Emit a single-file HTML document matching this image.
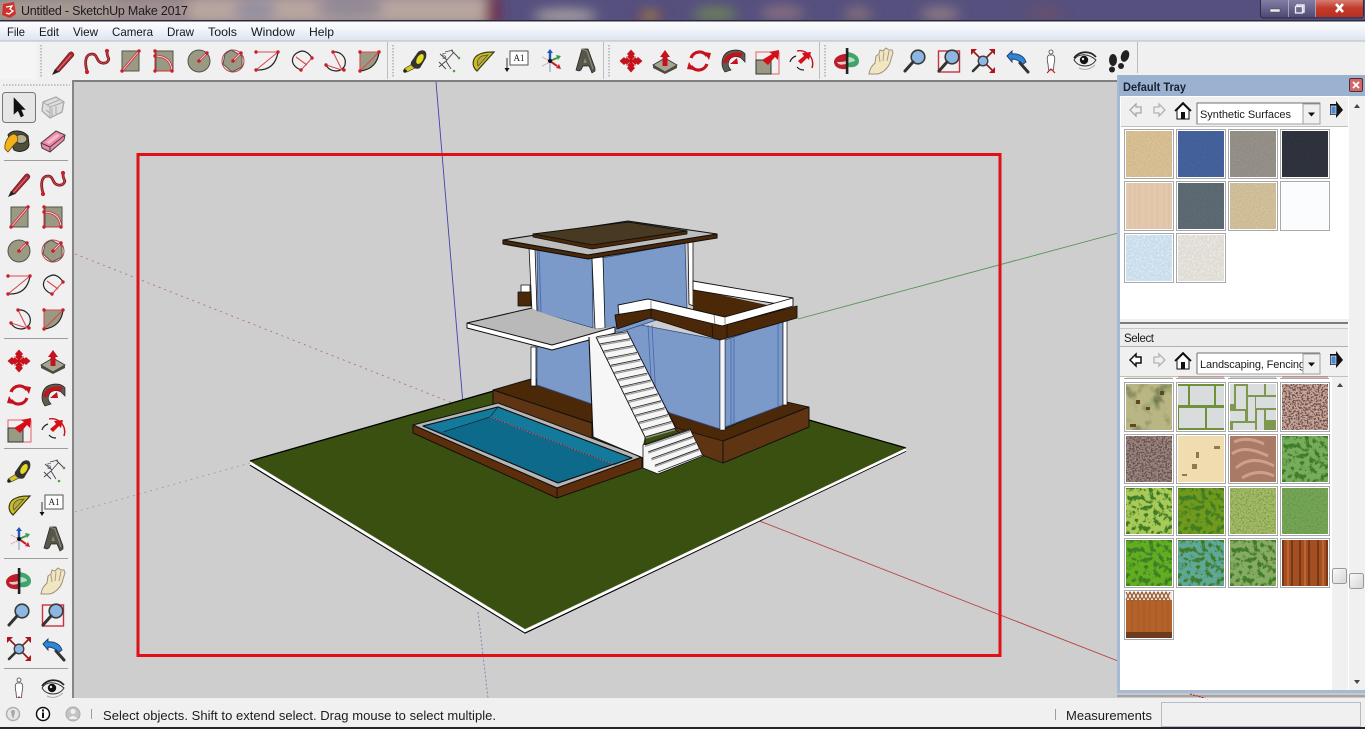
<!DOCTYPE html>
<html lang="en"><head><meta charset="utf-8"><title>Untitled - SketchUp Make 2017</title>
<style>html,body{margin:0;padding:0;background:#f0f0f0;overflow:hidden}svg{display:block}text{font-family:"Liberation Sans",sans-serif}</style></head>
<body>
<svg xmlns="http://www.w3.org/2000/svg" width="1365" height="729" viewBox="0 0 1365 729">
<defs>
<linearGradient id="gMenu" x1="0" y1="0" x2="0" y2="1"><stop offset="0" stop-color="#fbfcfe"/><stop offset=".35" stop-color="#f4f7fb"/><stop offset="1" stop-color="#dce4f1"/></linearGradient>
<linearGradient id="gMin" x1="0" y1="0" x2="0" y2="1"><stop offset="0" stop-color="#8b87a8"/><stop offset=".5" stop-color="#6b6790"/><stop offset="1" stop-color="#4b4770"/></linearGradient>
<linearGradient id="gClose" x1="0" y1="0" x2="0" y2="1"><stop offset="0" stop-color="#d9867a"/><stop offset=".5" stop-color="#c23b2b"/><stop offset="1" stop-color="#b9301f"/></linearGradient>
<linearGradient id="gThumb" x1="0" y1="0" x2="1" y2="1"><stop offset="0" stop-color="#fafafa"/><stop offset="1" stop-color="#d4d4d4"/></linearGradient>
<filter id="bl" x="-30%" y="-60%" width="160%" height="220%"><feGaussianBlur stdDeviation="6"/></filter>
<filter id="fFine" x="0" y="0" width="100%" height="100%"><feTurbulence type="fractalNoise" baseFrequency=".8" numOctaves="2" seed="3" result="t"/><feColorMatrix in="t" type="matrix" values="0 0 0 0 0 0 0 0 0 0 0 0 0 0 0 .5 0 0 0 -.2"/><feComposite in2="SourceGraphic" operator="in" result="n"/><feMerge><feMergeNode in="SourceGraphic"/><feMergeNode in="n"/></feMerge></filter>
<filter id="fSpeck" x="0" y="0" width="100%" height="100%"><feTurbulence type="fractalNoise" baseFrequency=".55" numOctaves="2" seed="8" result="t"/><feColorMatrix in="t" type="matrix" values="0 0 0 0 .15 0 0 0 0 .08 0 0 0 0 .08 7 0 0 0 -3.2"/><feComposite in2="SourceGraphic" operator="in" result="n"/><feMerge><feMergeNode in="SourceGraphic"/><feMergeNode in="n"/></feMerge></filter>
<filter id="fLeaf" x="0" y="0" width="100%" height="100%"><feTurbulence type="fractalNoise" baseFrequency=".2" numOctaves="3" seed="5" result="t"/><feColorMatrix in="t" type="matrix" values="0 0 0 0 .05 0 0 0 0 .2 0 0 0 0 .02 7 0 0 0 -3.4"/><feComposite in2="SourceGraphic" operator="in" result="n"/><feMerge><feMergeNode in="SourceGraphic"/><feMergeNode in="n"/></feMerge></filter>
<filter id="fBlot" x="0" y="0" width="100%" height="100%"><feTurbulence type="fractalNoise" baseFrequency=".07" numOctaves="3" seed="12" result="t"/><feColorMatrix in="t" type="matrix" values="0 0 0 0 .1 0 0 0 0 .15 0 0 0 0 .05 2.500 0 0 0 -1.250"/><feComposite in2="SourceGraphic" operator="in" result="n"/><feMerge><feMergeNode in="SourceGraphic"/><feMergeNode in="n"/></feMerge></filter>
<filter id="fGrass" x="0" y="0" width="100%" height="100%"><feTurbulence type="fractalNoise" baseFrequency=".6" numOctaves="2" seed="21" result="t"/><feColorMatrix in="t" type="matrix" values="0 0 0 0 .15 0 0 0 0 .25 0 0 0 0 .05 2.500 0 0 0 -1.050"/><feComposite in2="SourceGraphic" operator="in" result="n"/><feMerge><feMergeNode in="SourceGraphic"/><feMergeNode in="n"/></feMerge></filter>
<filter id="fIce" x="0" y="0" width="100%" height="100%"><feTurbulence type="fractalNoise" baseFrequency=".5" numOctaves="3" seed="2" result="t"/><feColorMatrix in="t" type="matrix" values="0 0 0 0 1 0 0 0 0 1 0 0 0 0 1 1.2 0 0 0 -.5"/><feComposite in2="SourceGraphic" operator="in" result="n"/><feMerge><feMergeNode in="SourceGraphic"/><feMergeNode in="n"/></feMerge></filter>

<rect id="frame" x=".5" y=".5" width="49" height="49" fill="#fff" stroke="#a8a8a8"/>

<!-- ICONS (centred at 0,0) -->
<g id="pencil"><path d="M-8,9 L6,-8 Q8,-10 9.500,-8.500 L10.500,-7.500 Q11.500,-6 10,-4.500 L-4,11 Z" fill="#ad2730" stroke="#5a1a1c" stroke-width=".6"/><path d="M-6,10 L8,-6" stroke="#e2858a" fill="none" stroke-width=".8"/><path d="M-11,14 L-8,8 L-4,11 Z" fill="#222"/></g>
<g id="free"><path d="M-10,10 C-13,0 -11,-7 -5,-7 C1,-7 -1,1 5,2 C10,3 13,-1 11,-4 C10,-6 10,-8 10,-10" fill="none" stroke="#8e1a22" stroke-width="2.800"/><path d="M-10,10 C-13,0 -11,-7 -5,-7 C1,-7 -1,1 5,2 C10,3 13,-1 11,-4 C10,-6 10,-8 10,-10" fill="none" stroke="#c9565c" stroke-width=".7"/><circle cx="-10" cy="11" r="2.100" fill="#c8202a"/><circle cx="10" cy="-10" r="2.100" fill="#c8202a"/></g>
<g id="rect"><rect x="-8" y="-10" width="17" height="20" fill="#9a9984" stroke="#55554a"/><path d="M-8,10 L9,-10" stroke="#d03040" stroke-width="2.600"/><path d="M-8,10 L9,-10" stroke="#f4dcdc" stroke-width=".9"/><circle cx="-8" cy="10" r="1.700" fill="#c8202a"/><circle cx="9" cy="-10" r="1.700" fill="#c8202a"/></g>
<g id="rrect"><rect x="-8" y="-10" width="17" height="20" fill="#9a9984" stroke="#55554a"/><path d="M-9,-5 Q7,-5 8,10" fill="none" stroke="#d03040" stroke-width="2.600"/><path d="M-9,-5 Q7,-5 8,10" fill="none" stroke="#f4dcdc" stroke-width=".9"/><path d="M-9,-10 V10 H9" fill="none" stroke="#c8303a"/><g fill="#c8202a"><circle cx="-9" cy="-10" r="1.700"/><circle cx="-9" cy="-5" r="1.700"/><circle cx="-9" cy="10" r="1.700"/><circle cx="8" cy="10" r="1.700"/></g></g>
<g id="circ"><circle r="11" fill="#9a9984" stroke="#55554a"/><path d="M0,0 L8,-8" stroke="#d03040" stroke-width="2.600"/><path d="M0,0 L8,-8" stroke="#f4dcdc" stroke-width=".9"/><circle r="1.800" fill="#c8202a"/><circle cx="8" cy="-8" r="1.700" fill="#c8202a"/></g>
<g id="poly"><circle r="11" fill="none" stroke="#c8404a"/><path d="M-2,-11 L9,-5 L9,6 L-1,11 L-10,3 L-8,-7 Z" fill="#9a9984" stroke="#55554a"/><path d="M0,0 L8,-8" stroke="#d03040" stroke-width="2.600"/><path d="M0,0 L8,-8" stroke="#f4dcdc" stroke-width=".9"/><circle r="1.800" fill="#c8202a"/><circle cx="8" cy="-8" r="1.700" fill="#c8202a"/></g>
<g id="arc"><path d="M-11,-9 H11 M-11,9 L11,-9" stroke="#d84a52" fill="none" stroke-width="1.100"/><path d="M-11,9 Q8,10 11,-9" fill="none" stroke="#222" stroke-width="1.200"/><g fill="#c8202a"><circle cx="-11" cy="-9" r="1.700"/><circle cx="11" cy="-9" r="1.700"/><circle cx="-11" cy="9" r="1.700"/></g></g>
<g id="arc2"><path d="M-1,9 C-14,4 -11,-8 0,-10 C3,-10 7,-8 10,-3" fill="none" stroke="#222" stroke-width="1.200"/><path d="M-1,9 L10,-3 M-6,-4 L5,4" stroke="#d84a52" fill="none" stroke-width="1.100"/><g fill="#c8202a"><circle cx="-1" cy="9" r="1.700"/><circle cx="10" cy="-3" r="1.700"/></g></g>
<g id="arc3"><path d="M-10,4 C-6,12 6,12 9,4 C11,-4 4,-10 -3,-9" fill="none" stroke="#222" stroke-width="1.200"/><path d="M-10,4 L6,9 L-3,-9" stroke="#d84a52" fill="none" stroke-width="1.100"/><g fill="#c8202a"><circle cx="-10" cy="4" r="1.700"/><circle cx="8" cy="9" r="1.700"/><circle cx="-3" cy="-9" r="1.700"/></g></g>
<g id="pie"><path d="M-9,10 L-9,-9 H10 C9,2 2,9 -9,10 Z" fill="#9a9984"/><path d="M-9,10 C2,9 9,2 10,-9" stroke="#222" fill="none" stroke-width="1.200"/><path d="M-9,10 V-9 H10 L-9,10" stroke="#d84a52" fill="none" stroke-width="1.100"/><g fill="#c8202a"><circle cx="-9" cy="-9" r="1.700"/><circle cx="10" cy="-9" r="1.700"/><circle cx="-9" cy="10" r="1.700"/></g></g>
<g id="tape"><path d="M-11,8 L-3,3 L0,7 L-8,11 Z" fill="#d6c922" stroke="#333" stroke-width=".6"/><path d="M-4,1 L3,-9 Q7,-12 10,-10 Q12,-8 11,-3 L5,7 Q1,9 -2,6 Q-5,4 -4,1 Z" fill="#333"/><ellipse cx="5" cy="-2" rx="3" ry="5.500" transform="rotate(30 5 -2)" fill="#e4da20"/><circle cx="-10" cy="10" r="1.800" fill="#222"/></g>
<g id="dim"><path d="M-8,-7 L-1,-1 M-3,-9 L5,-11 M-2,8 L-9,1 M3,-11 L11,-3 M-9,6 L-2,0 M-2,0 L6,-9 M-2,0 L3,8" stroke="#444" fill="none" stroke-width=".9"/><text x="-6" y="-2" font-size="8" fill="#555">5</text><circle cx="11" cy="-3" r="1.300" fill="#4fa33c"/><circle cx="6" cy="10" r="1.300" fill="#4fa33c"/></g>
<g id="prot"><path d="M-6,10 C-12,5 -11,-4 -3,-7 C2,-9 6,-9 11,-9 Z" fill="#c9bd2c" stroke="#3c3a12" stroke-width="1.200"/><path d="M-5,5 C-7,1 -5,-3 -1,-5 L5,-6 Z" fill="#b5ab48" stroke="#59561a" stroke-width=".8"/></g>
<g id="txt"><rect x="-8" y="-10" width="18" height="14" fill="#fff" stroke="#555"/><text x="1" y="0" text-anchor="middle" font-size="9" fill="#222" style="font-family:'Liberation Serif',serif">A1</text><path d="M-11,-3 V8" stroke="#333"/><path d="M-13.500,7 H-8.500 L-11,11 Z" fill="#111"/></g>
<g id="axes"><path d="M0,0 V-9" stroke="#2255c0" stroke-width="2.400"/><path d="M-3,-8 L0,-12 L3,-8 Z" fill="#2255c0"/><path d="M0,2 V11" stroke="#b7c4dc" stroke-width="2"/><path d="M0,0 L7,-3" stroke="#3a9a3a" stroke-width="2"/><path d="M6,-6 L11,-5 L8,-1 Z" fill="#3a9a3a"/><path d="M0,0 L7,5" stroke="#c8202a" stroke-width="2"/><path d="M6,7 L11,8 L9,3 Z" fill="#c8202a"/><path d="M-2,-1 L-8,-4 M-2,2 L-8,5" stroke="#d9a0a0" stroke-dasharray="1.500 1" stroke-width="1.300"/><circle r="2" fill="#111"/></g>
<g id="t3d"><path d="M-9,9 L-3,-12 L3,-12 L10,7 L10,10 L7,12 L4,5 L-2,5 L-4,9 L-6,10 Z" fill="#56564a" stroke="#222" stroke-width=".7"/><path d="M0,-3 L-1.500,2 H2 Z" fill="#8a8a78"/><path d="M-3,-12 L2,-10 L8,8" stroke="#8a8a78" fill="none" stroke-width="1.200"/></g>
<g id="move"><path d="M0,-11.500 L4,-7 L2.500,-5.500 L5.500,-2.500 L7,-4 L11.500,0 L7,4 L5.500,2.500 L2.500,5.500 L4,7 L0,11.500 L-4,7 L-2.500,5.500 L-5.500,2.500 L-7,4 L-11.500,0 L-7,-4 L-5.500,-2.500 L-2.500,-5.500 L-4,-7 Z" fill="#c4121e"/><path d="M-5,-5 L-1.500,-1.500 M5,-5 L1.500,-1.500 M5,5 L1.500,1.500 M-5,5 L-1.500,1.500" stroke="#e98" stroke-width=".8"/></g>
<g id="push"><path d="M-12,4 L0,-3 L12,4 L0,11 Z" fill="#a6a58f" stroke="#333" stroke-width=".8"/><path d="M-12,4 V7 L0,13 L12,7 V4 L0,11 Z" fill="#4c4c40"/><path d="M-2.500,5 V-4 H-5 L0,-11 L5,-4 H2.500 V5 Z" fill="#c4121e"/></g>
<g id="rot"><path d="M-8,-3 A9,9 0 0 1 8,-5" fill="none" stroke="#c4121e" stroke-width="3.200"/><path d="M5,-9 L12,-8 L10,-1 Z" fill="#c4121e"/><path d="M8,3 A9,9 0 0 1 -8,5" fill="none" stroke="#c4121e" stroke-width="3.200"/><path d="M-5,9 L-12,8 L-10,1 Z" fill="#c4121e"/></g>
<g id="follow"><path d="M-8,11 C-13,5 -12,-7 -3,-10 C3,-12 9,-11 12,-7 L12,1 L8,-3 C3,-6 -3,-4 -4,0 C-6,4 -4,7 -2,9 Z" fill="#5c5c50" stroke="#222" stroke-width=".7"/><path d="M-8,2 C-7,-5 1,-8 9,-6" stroke="#c4121e" stroke-width="4" fill="none"/><path d="M-3,3 L4,-3 L5,3 Z" fill="#c4121e"/></g>
<g id="scale"><rect x="-11" y="-9" width="23" height="22" fill="none" stroke="#e0606a"/><rect x="-11" y="-1" width="15" height="14" fill="#9a9984" stroke="#333"/><path d="M-5,-1 L5,-7 L2,-9 L12,-11 L11,-1 L8,-4 L1,4 Z" fill="#d40f18"/></g>
<g id="offset"><path d="M-4,-10 A13,13 0 0 1 11,7" fill="none" stroke="#c4121e" stroke-width="1.400"/><path d="M-11,1 A9,9 0 0 1 -5,-5" fill="none" stroke="#222" stroke-width="1.200"/><path d="M-4,6 A9,9 0 0 0 3,9" fill="none" stroke="#222" stroke-width="1.200"/><path d="M-3,0 L3,-5 L1,-8 L10,-9 L8,-1 L6,-3 L0,3 Z" fill="#d40f18"/></g>
<g id="orbit"><path d="M-1,-7 C-8,-7 -13,-3 -13,1 C-13,6 -7,9 -1,8 Z" fill="#b81f2b"/><path d="M-10,1 C-9,4 -5,4 -1,3 V0 C-4,1 -7,1 -10,1 Z" fill="#e8c8c8"/><path d="M1,-9 C7,-8 12,-5 12,0 C12,5 7,7 1,6 Z" fill="#3fa56a"/><path d="M1,-4 C5,-4 8,-2 8,0 L1,2 Z" fill="#b8dcc4"/><rect x="-1.200" y="-13" width="2.600" height="26" fill="#222"/></g>
<g id="pan"><path d="M-12,13 C-11,7 -9,5 -6,2 L-5,-5 L-2,-7 L-1,-11 L2,-10 L5,-13 L8,-11 L11,-11 L12,-8 L10,-2 C9,5 3,12 -4,13 Z" fill="#f1e6c4" stroke="#9c9278"/><path d="M-2,-6 L-1,1 M3,-9 L2,0 M8,-10 L6,0" stroke="#a99d82" fill="none"/></g>
<g id="zoom"><circle cx="3" cy="-4" r="6.800" fill="#8cb7e2" stroke="#3a3a3a" stroke-width="1.600"/><path d="M-2,1 L-10,10" stroke="#333" stroke-width="3" stroke-linecap="round"/></g>
<g id="zwin"><rect x="-10.500" y="-10" width="21" height="21" fill="none" stroke="#c83040" stroke-width="1.400"/><use href="#zoom"/></g>
<g id="zext"><path d="M-3,-3 L-9,-9 M3,-3 L9,-9 M3,3 L9,9" stroke="#8a1a22" stroke-width="1.600"/><path d="M-12,-6 V-12 H-6 Z M12,-6 V-12 H6 Z M12,6 V12 H6 Z" fill="#b5121c"/><circle r="4.800" fill="#8cb7e2" stroke="#3a3a3a" stroke-width="1.300"/><path d="M-4,4 L-10,10" stroke="#333" stroke-width="2.600" stroke-linecap="round"/></g>
<g id="prev"><path d="M-10,-5 L-5,-10 L-5,-7 C1,-8 7,-5 9,1 L5,4 C3,0 -1,-2 -5,-2 L-5,1 Z" fill="#2f86d8" stroke="#1a3a66" stroke-width=".9"/><path d="M3,2 L11,11" stroke="#333" stroke-width="3" stroke-linecap="round"/></g>
<g id="pos"><circle cy="-9" r="2" fill="#fff" stroke="#444" stroke-width=".8"/><path d="M-2,-6 H2 C4,-5 4,-1 3,3 L2.500,9 H-2.500 L-3,3 C-4,-1 -4,-5 -2,-6 Z" fill="#fff" stroke="#444" stroke-width=".8"/><path d="M-4,12 L0,8 L4,12" stroke="#c4202a" fill="none" stroke-width="1.200"/></g>
<g id="look"><path d="M-11,-1 C-7,-8 3,-8 11,-1 C6,7 -6,7 -11,-1 Z" fill="#eee" stroke="#333" stroke-width=".9"/><circle cx="-1" cy="-1" r="4.200" fill="#111"/><circle cx="-2" cy="-2" r="1.200" fill="#eee"/><path d="M-11,-3 C-6,-10 5,-11 11,-4" fill="none" stroke="#222" stroke-width="1.700"/><path d="M-6,7 Q2,11 10,4" stroke="#aaa" fill="none"/></g>
<g id="walk"><ellipse cx="-6" cy="-1" rx="4" ry="6" fill="#222"/><ellipse cx="-7" cy="8.500" rx="3" ry="3" fill="#222"/><ellipse cx="6" cy="-5" rx="4" ry="6" fill="#222" transform="rotate(20 6 -5)"/><ellipse cx="2" cy="5" rx="3" ry="3" fill="#222"/></g>
<g id="select"><path d="M-5,-9 V7 L-1,3.500 L2,10 L4.500,8.500 L2,2.500 L6,2.500 Z" fill="#111" stroke="#111" stroke-width=".6"/></g>
<g id="comp"><path d="M-10,-5 L3,-10 L11,-5 L9,5 L-3,11 L-11,4 Z" fill="#dedede" stroke="#aaa" stroke-width="1.300"/><path d="M-10,-5 L-3,0 L11,-5 M-3,0 L-3,11 M-6,-2 L6,-7 M-7,3 L-3,6 M-1,1 L-1,9 M3,-1 L3,7" stroke="#aaa" fill="none"/></g>
<g id="paint"><path d="M-9,-6 C-5,-12 6,-11 11,-5 L12,4 C11,10 2,12 -3,9 Z" fill="#4f4f3a" stroke="#222"/><ellipse cx="4" cy="-2" rx="6" ry="4.500" fill="#b4b08e" stroke="#333"/><path d="M-3,-7 C-9,-6 -13,2 -12,8 L-9,11 C-7,9 -3,3 0,1 C2,-3 0,-6 -3,-7 Z" fill="#f3b219" stroke="#6a4a10" stroke-width=".8"/></g>
<g id="erase"><path d="M-12,2 L3,-10 L12,-6 L11,-1 L-3,11 L-11,7 Z" fill="#f089a8" stroke="#444"/><path d="M-12,2 L-3,6 L-3,11 M-3,6 L12,-6" stroke="#444" fill="none"/><path d="M-7,1 L4,-7 L7,-5.500 L-4,3 Z" fill="#f8b7cb"/></g>
</defs>

<!-- TITLE BAR -->
<rect width="1365" height="21" fill="#55507e"/>
<g filter="url(#bl)">
<rect x="-10" y="-6" width="125" height="32" fill="#a49891"/>
<rect x="115" y="-6" width="90" height="32" fill="#a08f90"/>
<rect x="190" y="-6" width="300" height="32" fill="#b8a59f"/>
<ellipse cx="255" cy="10" rx="22" ry="9" fill="#8f8da0"/><ellipse cx="350" cy="8" rx="35" ry="10" fill="#8f8896"/>
<rect x="486" y="-4" width="14" height="30" fill="#752b4c"/>
<ellipse cx="565" cy="16" rx="32" ry="7" fill="#a8a0a0"/>
<ellipse cx="650" cy="16" rx="15" ry="6" fill="#7a3c58"/><ellipse cx="650" cy="16" rx="7" ry="5" fill="#a0883c"/>
<ellipse cx="715" cy="14" rx="22" ry="7" fill="#6e8258"/>
<ellipse cx="782" cy="13" rx="22" ry="7" fill="#8a7080"/>
<ellipse cx="858" cy="14" rx="14" ry="7" fill="#85707a"/>
<ellipse cx="940" cy="14" rx="20" ry="7" fill="#907a85"/>
<ellipse cx="1045" cy="13" rx="18" ry="6" fill="#6b5168"/>
</g>
<g transform="translate(9,10)"><path d="M-6,-6 L5,-8 L7,4 L1,8 L-7,5 Z" fill="#d0312d"/><path d="M-3,-3 L3,-4 L1,-1 L4,1 L0,4 L-3,3" fill="none" stroke="#fff" stroke-width="1.300"/></g>
<text x="21" y="15" font-size="12.500" fill="#1d1a20" textLength="167" lengthAdjust="spacing">Untitled - SketchUp Make 2017</text>
<!-- window buttons -->
<rect x="1260.500" y="-3" width="103" height="21" rx="3" fill="url(#gMin)" stroke="#2e2b47"/>
<rect x="1316" y="-1" width="47" height="18" fill="url(#gClose)"/>
<path d="M1288.500,0 V17 M1315.500,0 V17" stroke="#cfcde0" stroke-opacity=".6"/>
<rect x="1270" y="9" width="10" height="3" fill="#eee" stroke="#444" stroke-width=".5"/>
<rect x="1297" y="5" width="7" height="7" fill="none" stroke="#eee" stroke-width="1.500"/><rect x="1295.500" y="6.500" width="7" height="6.500" fill="#6b6790" stroke="#eee" stroke-width="1.300"/>
<path d="M1336,4 L1343,12 M1343,4 L1336,12" stroke="#fff" stroke-width="2.600"/>
<rect y="20" width="1365" height="1.500" fill="#2c2a38"/>

<!-- MENU -->
<rect y="21.500" width="1365" height="19.500" fill="url(#gMenu)"/>
<rect y="40.500" width="1365" height="1" fill="#bcbcbc"/>
<g font-size="12" fill="#15181c">
<text x="7" y="36" textLength="18" lengthAdjust="spacingAndGlyphs">File</text>
<text x="39" y="36" textLength="20" lengthAdjust="spacingAndGlyphs">Edit</text>
<text x="73" y="36" textLength="25" lengthAdjust="spacingAndGlyphs">View</text>
<text x="112" y="36" textLength="41" lengthAdjust="spacingAndGlyphs">Camera</text>
<text x="167" y="36" textLength="27" lengthAdjust="spacingAndGlyphs">Draw</text>
<text x="208" y="36" textLength="29" lengthAdjust="spacingAndGlyphs">Tools</text>
<text x="251" y="36" textLength="44" lengthAdjust="spacingAndGlyphs">Window</text>
<text x="309" y="36" textLength="25" lengthAdjust="spacingAndGlyphs">Help</text>
</g>

<!-- TOP TOOLBAR BACKGROUND -->
<rect y="41.500" width="1365" height="39" fill="#f0f0f0"/>
<rect y="41.500" width="37" height="38" fill="#f5f5f5"/>
<g stroke="#aeaeae" stroke-width="1.500" stroke-dasharray="1.500 1.500">
<path d="M41,45 V77 M393,45 V77 M609,45 V77 M825,45 V77"/>
</g>
<path d="M387.500,42 V79 M603.500,42 V79 M819.500,42 V79 M1137.500,42 V73" stroke="#bdbdbd"/>

<!-- CANVAS -->
<rect x="72" y="80" width="1046" height="619" fill="#cecece"/>
<rect x="72" y="80" width="1046" height="2" fill="#7e7e7e"/>
<rect x="72" y="80" width="2" height="619" fill="#858585"/>

<!-- axes -->
<path d="M436,82 L463,404" stroke="#2a2aa8" stroke-width=".9" stroke-opacity=".85"/>
<path d="M478,612 L488,698" stroke="#6a6aa8" stroke-width="1" stroke-dasharray="2 2" stroke-opacity=".7"/>
<path d="M75,254 L455,404" stroke="#a84a4a" stroke-width=".9" stroke-dasharray="2 4" stroke-opacity=".7"/>
<path d="M75,512 L250,463" stroke="#7a9a7a" stroke-width=".9" stroke-dasharray="2 4" stroke-opacity=".7"/>
<path d="M757,520 L1118,661" stroke="#b42020" stroke-width=".9" stroke-opacity=".85"/>
<path d="M798,319 L1118,233" stroke="#3f8a3f" stroke-width=".9" stroke-opacity=".85"/>

<!-- MODEL -->
<g stroke-linejoin="round">
<!-- ground -->
<path d="M250,461 L600,360 L906,448 L525,629 Z" fill="#3a5010"/>
<path d="M250,461 L497,390 M809,420 L906,448" stroke="#000" stroke-width="1.300" fill="none"/>
<path d="M250,465 L525,633 L906,451" stroke="#000" stroke-width="1.300" fill="none"/>
<path d="M250,463 L525,631 L906,449.500" stroke="#fff" stroke-width="2.500" fill="none"/>

<!-- pool base / platform -->
<path d="M493,390 L531,379 L596,402 L592,423 Z" fill="#4a2808" stroke="#111"/>
<path d="M493,390 L592,423 L592,439 L493,405 Z" fill="#5f3412" stroke="#111"/>
<path d="M413,425 L498,403 L642,457 L557,488 Z" fill="#b6b6b6" stroke="#111"/>
<path d="M413,425 L557,488 L557,498 L413,433 Z" fill="#5c2e0c" stroke="#111"/>
<path d="M557,488 L642,457 L642,468 L557,498 Z" fill="#5c2e0c" stroke="#111"/>
<path d="M423,426 L498,407 L632,458 L558,483 Z" fill="#0e6a8b" stroke="#111"/>
<path d="M443,432 L490,417 L615,465 L632,458 L498,407 L423,426 Z" fill="#137a9b"/>
<path d="M443,432 L490,417 L615,465 M498,407 L490,417" stroke="#0c2a38" stroke-width=".7" fill="none"/>
<path d="M490,417 L615,465" stroke="#b05a70" stroke-width="1" stroke-dasharray="2 1"/>
<path d="M423,426 L498,407 L632,458 L558,483 Z" fill="none" stroke="#111"/>

<!-- right base -->
<path d="M640,400 L670,412 L722,430 L787,402 L809,407 L723,441 L673,427 L640,420 Z" fill="#4a2808"/>
<path d="M673,427 L723,441 L723,463 L702,455 Z" fill="#5f3412" stroke="#111" stroke-width=".8"/>
<path d="M723,441 L809,407 L809,427 L723,463 Z" fill="#5f3412" stroke="#111"/>
<path d="M722,430 L787,402 L809,407" stroke="#111" fill="none" stroke-width=".8"/>

<!-- lower glass -->
<path d="M537,347 L592,340 L592,404 L537,385 Z" fill="#7b9aca" stroke="#304a80" stroke-width=".8"/>
<path d="M531,347 H536 V386 H531 Z" fill="#fff" stroke="#111" stroke-width=".8"/>
<path d="M625,322 L720,340 L720,429 L670,413 L640,395 Z" fill="#7b9aca" stroke="#304a80" stroke-width=".8"/>
<path d="M725,340 L783,320 L783,405 L725,427 Z" fill="#7b9aca" stroke="#304a80" stroke-width=".8"/>
<path d="M648,325 L652,395 M652,325 L656,400 M731,338 V425 M734,337 V424 M778,323 V406" stroke="#4a6cac" fill="none" stroke-width=".9"/>
<rect x="720" y="339" width="5" height="91" fill="#f4f6fb" stroke="#111" stroke-width=".5"/>
<rect x="783" y="318" width="4" height="87" fill="#fff" stroke="#111" stroke-width=".7"/>

<!-- upper glass -->
<path d="M537,248 L592,258 L593,328 L538,312 Z" fill="#7b9aca" stroke="#304a80" stroke-width=".8"/>
<path d="M602,258 L685,243 L687,310 L620,332 L603,332 Z" fill="#7b9aca" stroke="#304a80" stroke-width=".8"/>
<path d="M529,247 L535,248 L537,312 L532,312 Z" fill="#fff" stroke="#111" stroke-width=".8"/>
<path d="M592,258 L603,257 L605,328 L595,329 Z" fill="#fff" stroke="#111" stroke-width=".8"/>
<path d="M688,242 L693,241 L693,306 L689,304 Z" fill="#fff" stroke="#111" stroke-width=".8"/>
<path d="M539,250 L541,312" stroke="#4a6cac"/>
<!-- small box -->
<rect x="521" y="285" width="9" height="8" fill="#fff" stroke="#111" stroke-width=".8"/>
<rect x="518" y="292" width="13" height="14" fill="#4a2808" stroke="#111" stroke-width=".8"/>

<!-- left slab -->
<path d="M467,323 L532,308 L537,311 L593,329 L615,327 L552,345 Z" fill="#b9b9b9"/>
<path d="M467,323 L552,345 L615,327 L615,333 L552,350 L467,328 Z" fill="#fff" stroke="#111"/>
<path d="M467,323 L532,308" stroke="#111"/>

<!-- roof -->
<path d="M503,240 L628,221 L717,234 L588,255 Z" fill="#bdbdbd" stroke="#111" stroke-width="1.100"/>
<path d="M503,240 L588,255 L717,234 L717,238 L588,259 L503,244 Z" fill="#4a2808" stroke="#111" stroke-width="1.100"/>
<path d="M533,234 L628,222 L687,231 L592,245 Z" fill="#483a22" stroke="#111"/>
<path d="M533,234 L592,245 L687,231 L687,234 L592,249 L533,237 Z" fill="#4a2808" stroke="#111" stroke-width=".8"/>

<!-- terrace -->
<path d="M693,289 L767,305 L790,310 L737,325 L693,310 Z" fill="#4a2808"/>
<path d="M693,281 L793,298 L793,301 L778,304 L693,290 Z" fill="#fff" stroke="#111" stroke-width=".9"/>
<path d="M618,305 L648,299 L725,317 L793,298 L793,306 L722,326 L652,310 L619,315 Z" fill="#fff" stroke="#111" stroke-width=".9"/>
<path d="M651,301 V310 M714,315 L715,324 M725,317 V324" stroke="#777" fill="none" stroke-width=".8"/>
<path d="M615,315 L652,309 L722,326 L797,306 L797,318 L720,340 L650,318 L617,329 Z" fill="#4a2808" stroke="#111" stroke-width=".9"/>
<path d="M651,310 V319 M712,325 L713,337 M727,325 V338" stroke="#1a0e04" fill="none" stroke-width=".8"/>

<!-- stairs wall and treads -->
<path d="M589,337 L596,336 L645,437 L643,445 L643,458 L593,437 Z" fill="#f6f6f6"/>
<path d="M589,337 L593,437 L643,458" stroke="#111" fill="none" stroke-width="1.100"/>
<path d="M596,337 L627,331 L675,428 L645,437 Z" fill="#f6f6f6"/>
<g fill="none" stroke="#222" stroke-width=".8">
<path d="M596.700,336.700 L626.700,331.700 M600.200,343.800 L630.200,338.600 M603.700,351 L633.600,345.500 M607.200,358.100 L637.100,352.400 M610.700,365.300 L640.500,359.300 M614.200,372.400 L644,366.200 M617.700,379.500 L647.400,373.100 M621.200,386.700 L650.900,380 M624.700,393.800 L654.300,386.900 M628.200,401 L657.800,393.800 M631.700,408.100 L661.200,400.700 M635.200,415.200 L664.700,407.600 M638.700,422.400 L668.100,414.500 M642.200,429.500 L671.600,421.400 M645.700,436.700 L675,428.300"/>
</g>
<g fill="none" stroke="#9a9a9a" stroke-width="1.200" transform="translate(0,1.400)">
<path d="M596.700,336.700 L626.700,331.700 M600.200,343.800 L630.200,338.600 M603.700,351 L633.600,345.500 M607.200,358.100 L637.100,352.400 M610.700,365.300 L640.500,359.300 M614.200,372.400 L644,366.200 M617.700,379.500 L647.400,373.100 M621.200,386.700 L650.900,380 M624.700,393.800 L654.300,386.900 M628.200,401 L657.800,393.800 M631.700,408.100 L661.200,400.700 M635.200,415.200 L664.700,407.600 M638.700,422.400 L668.100,414.500 M642.200,429.500 L671.600,421.400 M645.700,436.700 L675,428.300"/>
</g>
<path d="M596,337 L645,437 L645,445 M627,331 L676,428" stroke="#111" fill="none" stroke-width=".9"/>
<!-- lower stairs -->
<path d="M643,445 L690,429 L703,456 L658,474 L643,468 Z" fill="#f6f6f6" stroke="#111" stroke-width=".8"/>
<g fill="none" stroke="#222" stroke-width=".9"><path d="M645,445 L690,430 M648.300,451.800 L693,436.300 M651.500,458.500 L696,442.500 M654.800,465.300 L699,448.800 M658,472 L702,455"/></g>
<g fill="none" stroke="#9a9a9a" stroke-width="1.200" transform="translate(0,1.400)"><path d="M645,445 L690,430 M648.300,451.800 L693,436.300 M651.500,458.500 L696,442.500 M654.800,465.300 L699,448.800"/></g>
</g>

<!-- RED FRAME -->
<rect x="138" y="154.500" width="862" height="501" fill="none" stroke="#e01016" stroke-width="3"/>

<!-- TOP ICONS -->
<use href="#pencil" x="63" y="61"/><use href="#free" x="97" y="61"/><use href="#rect" x="130" y="61"/><use href="#rrect" x="164" y="61"/><use href="#circ" x="199" y="61"/><use href="#poly" x="233" y="61"/><use href="#arc" x="267" y="61"/><use href="#arc2" x="302" y="61"/><use href="#arc3" x="336" y="61"/><use href="#pie" x="369" y="61"/>
<use href="#tape" x="415" y="61"/><use href="#dim" x="448" y="61"/><use href="#prot" x="483" y="61"/><use href="#txt" x="518" y="61"/><use href="#axes" x="550" y="61"/><use href="#t3d" x="585" y="61"/>
<use href="#move" x="631" y="61"/><use href="#push" x="665" y="61"/><use href="#rot" x="699" y="61"/><use href="#follow" x="733" y="61"/><use href="#scale" x="767" y="61"/><use href="#offset" x="801" y="61"/>
<use href="#orbit" x="847" y="61"/><use href="#pan" x="881" y="61"/><use href="#zoom" x="915" y="61"/><use href="#zwin" x="949" y="61"/><use href="#zext" x="983" y="61"/><use href="#prev" x="1017" y="61"/><use href="#pos" x="1051" y="61"/><use href="#look" x="1085" y="61"/><use href="#walk" x="1119" y="61"/>

<!-- LEFT TOOLBAR -->
<rect x="0" y="80" width="72" height="619" fill="#f0f0f0"/>
<path d="M3,85 H70" stroke="#b4b4b4" stroke-width="1.500" stroke-dasharray="1.500 1.500"/>
<rect x="2.500" y="92.500" width="33" height="30" rx="3" fill="#e6e6e6" stroke="#777"/>
<path d="M4,160.500 H68 M4,338.500 H68 M4,448.500 H68 M4,558.500 H68 M4,668.500 H68" stroke="#9c9c9c"/>
<use href="#select" x="19" y="107"/><use href="#comp" x="53" y="107"/>
<use href="#paint" x="17" y="141"/><use href="#erase" x="53" y="141"/>
<use href="#pencil" x="19" y="183"/><use href="#free" x="53" y="183"/>
<use href="#rect" x="19" y="217"/><use href="#rrect" x="53" y="217"/>
<use href="#circ" x="19" y="251"/><use href="#poly" x="53" y="251"/>
<use href="#arc" x="19" y="285"/><use href="#arc2" x="53" y="285"/>
<use href="#arc3" x="21" y="319"/><use href="#pie" x="53" y="319"/>
<use href="#move" x="19" y="361"/><use href="#push" x="53" y="361"/>
<use href="#rot" x="19" y="395"/><use href="#follow" x="53" y="395"/>
<use href="#scale" x="19" y="429"/><use href="#offset" x="53" y="429"/>
<use href="#tape" x="19" y="471"/><use href="#dim" x="53" y="471"/>
<use href="#prot" x="19" y="505"/><use href="#txt" x="53" y="505"/>
<use href="#axes" x="19" y="539"/><use href="#t3d" x="53" y="539"/>
<use href="#orbit" x="19" y="581"/><use href="#pan" x="53" y="581"/>
<use href="#zoom" x="19" y="615"/><use href="#zwin" x="53" y="615"/>
<use href="#zext" x="19" y="649"/><use href="#prev" x="53" y="649"/>
<use href="#pos" x="19" y="689"/><use href="#look" x="53" y="689"/>

<!-- STATUS BAR -->
<rect y="698" width="1365" height="29" fill="#f0f0f0"/>
<rect y="727" width="1365" height="2" fill="#24262c"/>
<circle cx="13" cy="714" r="6.500" fill="#e6e6e6" stroke="#b0b0b0" stroke-width="1.500"/><path d="M11,712 A2,2 0 1 1 15,712 L13.500,718 H12.500 Z" fill="#a8a8a8"/>
<circle cx="43" cy="714" r="6.500" fill="#fff" stroke="#111" stroke-width="1.500"/><rect x="42" y="712.500" width="2" height="5.500" fill="#111"/><rect x="42" y="709.500" width="2" height="2" fill="#111"/>
<circle cx="73" cy="714" r="7" fill="#c4c4c4" stroke="#aaa"/><circle cx="73" cy="711.500" r="2.500" fill="#f0f0f0"/><path d="M68.500,719 Q73,713 77.500,719 Z" fill="#f0f0f0"/>
<path d="M91.500,709 V719 M1055.500,709 V720" stroke="#9c9c9c"/>
<text x="103" y="720" font-size="13" fill="#1c1c1c" textLength="393" lengthAdjust="spacing">Select objects. Shift to extend select. Drag mouse to select multiple.</text>
<text x="1066" y="720" font-size="13" fill="#1c1c1c" textLength="86" lengthAdjust="spacing">Measurements</text>
<rect x="1161.500" y="702.500" width="199" height="24" fill="#f0f0f0" stroke="#b4bcc6"/>

<!-- TRAY -->
<rect x="1117" y="75" width="248" height="622" fill="#f0f0f0"/>
<rect x="1117" y="75" width="3" height="616" fill="#a6bad4"/>
<rect x="1120" y="96" width="229" height="594" fill="#fff"/>
<rect x="1119" y="75" width="246" height="21" fill="#9ab2cf"/>
<text x="1123" y="91" font-size="12" font-weight="bold" fill="#1a2230" textLength="63" lengthAdjust="spacingAndGlyphs">Default Tray</text>
<rect x="1349.500" y="78.500" width="13" height="13" rx="1.500" fill="#d0686a" stroke="#5a2a3a"/>
<path d="M1353,82 L1359,88 M1359,82 L1353,88" stroke="#fff" stroke-width="1.800"/>
<rect x="1349" y="96" width="16" height="226" fill="#f0f0f0"/>
<path d="M1357,104 L1354,108 H1360 Z" fill="#444"/>
<!-- nav row 1 -->
<rect x="1121" y="97" width="227" height="29" fill="#f0f0f0"/>
<path d="M1121,126.500 H1348" stroke="#c0c0c0"/>
<path d="M1130,110 L1136,104 V107 H1141 V113 H1136 V116 Z" fill="#f0f0f0" stroke="#a8a8a8" stroke-width="1.300"/>
<path d="M1165,110 L1159,104 V107 H1154 V113 H1159 V116 Z" fill="#f0f0f0" stroke="#b4b4b4" stroke-width="1.300"/>
<g id="home"><path d="M1175,111 L1183,103 L1191,111" fill="none" stroke="#111" stroke-width="1.800"/><path d="M1177,110 V119 H1189 V110 L1183,104 Z" fill="#fff" stroke="#111"/><rect x="1181" y="112" width="4" height="7" fill="#111"/></g>
<rect x="1197" y="103" width="123" height="21" fill="#fff" stroke="#a0a0a0" stroke-width="1"/>
<path d="M1197,103 V124 M1197,103 H1320" stroke="#707070"/>
<rect x="1303" y="104" width="17" height="20" fill="#f0f0f0" stroke="#a0a0a0"/>
<path d="M1308,112.500 H1315 L1311.500,116.500 Z" fill="#111"/>
<text x="1200" y="118" font-size="11" fill="#1a1a1a" textLength="91" lengthAdjust="spacing">Synthetic Surfaces</text>
<path d="M1330,104 H1336 V101 L1343,110 L1336,118 V115 H1330 Z" fill="#111"/><rect x="1331" y="106" width="5" height="8" fill="#4a8ad8" stroke="#fff" stroke-width=".6"/>

<!-- swatches row set 1 -->
<g transform="translate(1124,129)"><use href="#frame"/><rect x="2" y="2" width="46" height="46" fill="#dcc296" filter="url(#fFine)"/></g>
<g transform="translate(1176,129)"><use href="#frame"/><rect x="2" y="2" width="46" height="46" fill="#47639f" filter="url(#fFine)"/></g>
<g transform="translate(1228,129)"><use href="#frame"/><rect x="2" y="2" width="46" height="46" fill="#97938a" filter="url(#fFine)"/></g>
<g transform="translate(1280,129)"><use href="#frame"/><rect x="2" y="2" width="46" height="46" fill="#30343f" filter="url(#fFine)"/></g>
<g transform="translate(1124,181)"><use href="#frame"/><rect x="2" y="2" width="46" height="46" fill="#e3c8ac"/><path d="M6,2 V48 M11,2 V48 M15,2 V48 M22,2 V48 M28,2 V48 M33,2 V48 M40,2 V48 M45,2 V48" stroke="#d9bfa4" stroke-width="1"/></g>
<g transform="translate(1176,181)"><use href="#frame"/><rect x="2" y="2" width="46" height="46" fill="#5e6c76" filter="url(#fFine)"/></g>
<g transform="translate(1228,181)"><use href="#frame"/><rect x="2" y="2" width="46" height="46" fill="#d4c29b" filter="url(#fFine)"/></g>
<g transform="translate(1280,181)"><use href="#frame"/><rect x="2" y="2" width="46" height="46" fill="#fbfcfe"/></g>
<g transform="translate(1124,233)"><use href="#frame"/><rect x="2" y="2" width="46" height="46" fill="#c6dcec" filter="url(#fIce)"/></g>
<g transform="translate(1176,233)"><use href="#frame"/><rect x="2" y="2" width="46" height="46" fill="#dedbd3" filter="url(#fIce)"/></g>

<!-- separator -->
<rect x="1120" y="319" width="245" height="3" fill="#f0f0f0"/>
<rect x="1120" y="322" width="228" height="2" fill="#7d7d7d"/>
<rect x="1120" y="324" width="228" height="5" fill="#f0f0f0"/>
<rect x="1120" y="328" width="228" height="1" fill="#c8c8c8"/>
<rect x="1120" y="329" width="228" height="18" fill="#ececec"/>
<path d="M1120,346.500 H1348" stroke="#b0b0b0"/>
<text x="1124" y="342" font-size="11.500" fill="#1a1a1a" textLength="30" lengthAdjust="spacing">Select</text>
<rect x="1120" y="347" width="228" height="29" fill="#f0f0f0"/>
<path d="M1120,376.500 H1348" stroke="#c0c0c0"/>
<path d="M1130,360 L1136,354 V357 H1141 V363 H1136 V366 Z" fill="#fff" stroke="#111" stroke-width="1.500"/>
<path d="M1165,360 L1159,354 V357 H1154 V363 H1159 V366 Z" fill="#f0f0f0" stroke="#b4b4b4" stroke-width="1.300"/>
<use href="#home" x="0" y="250"/>
<rect x="1197" y="353" width="123" height="21" fill="#fff"/>
<path d="M1197,353 V374 M1197,353 H1320" stroke="#707070"/><path d="M1320,353 V374 H1197" stroke="#a0a0a0" fill="none"/>
<text x="1200" y="368" font-size="11" fill="#1a1a1a" textLength="105" lengthAdjust="spacing">Landscaping, Fencing</text>
<rect x="1303" y="354" width="17" height="20" fill="#f0f0f0" stroke="#a0a0a0"/>
<path d="M1308,362.500 H1315 L1311.500,366.500 Z" fill="#111"/>
<path d="M1330,354 H1336 V351 L1343,360 L1336,368 V365 H1330 Z" fill="#111"/><rect x="1331" y="356" width="5" height="8" fill="#4a8ad8" stroke="#fff" stroke-width=".6"/>

<!-- scroll strips -->
<rect x="1332" y="377" width="16" height="313" fill="#f0f0f0"/>
<rect x="1349" y="329" width="16" height="361" fill="#f0f0f0"/>
<path d="M1340,383 L1337,387 H1343 Z" fill="#444"/>
<path d="M1354,680 H1360 L1357,684 Z" fill="#444"/>
<rect x="1332.500" y="568.500" width="14" height="15" rx="2" fill="url(#gThumb)" stroke="#999"/>
<rect x="1349.500" y="573.500" width="14" height="15" rx="2" fill="url(#gThumb)" stroke="#999"/>

<!-- partial row -->
<path d="M1124,378.500 H1173 M1176,378.500 H1225 M1228,378.500 H1277 M1280,378.500 H1329" stroke="#a8a8a8"/>
<path d="M1126,377 H1172" stroke="#c9c9a0"/><path d="M1178,377 H1224" stroke="#b08070"/><path d="M1230,377 H1276" stroke="#a8a8a0"/><path d="M1282,377 H1328" stroke="#b07050"/>

<!-- landscape swatches -->
<g transform="translate(1124,382)"><use href="#frame"/><rect x="2" y="2" width="46" height="46" fill="#b9b684" filter="url(#fBlot)"/><path d="M12,18 h4 v4 h-4z M36,9 h4 v4 h-4z M22,25 h4 v3 h-4z M6,42 h6 v3 h-6z" fill="#5e4a22"/></g>
<g transform="translate(1176,382)"><use href="#frame"/><rect x="2" y="2" width="46" height="46" fill="#70913c"/><rect x="14" y="4" width="24" height="19" fill="#d8dcdc"/><rect x="2" y="4" width="10" height="19" fill="#d8dcdc"/><rect x="40" y="4" width="8" height="19" fill="#d8dcdc"/><rect x="3" y="26" width="26" height="20" fill="#d8dcdc"/><rect x="31" y="26" width="17" height="20" fill="#d8dcdc"/></g>
<g transform="translate(1228,382)"><use href="#frame"/><rect x="2" y="2" width="46" height="46" fill="#7f9850"/><rect x="2" y="2" width="4" height="20" fill="#dadddd"/><rect x="8" y="4" width="10" height="23" fill="#dadddd"/><rect x="20" y="2" width="16" height="11" fill="#dadddd"/><rect x="38" y="2" width="10" height="11" fill="#dadddd"/><rect x="28" y="15" width="20" height="11" fill="#dadddd"/><rect x="20" y="15" width="7" height="24" fill="#dadddd"/><rect x="2" y="29" width="15" height="10" fill="#dadddd"/><rect x="29" y="28" width="7" height="20" fill="#dadddd"/><rect x="38" y="28" width="10" height="10" fill="#dadddd"/><rect x="5" y="41" width="22" height="7" fill="#dadddd"/></g>
<g transform="translate(1280,382)"><use href="#frame"/><rect x="2" y="2" width="46" height="46" fill="#c8a698" filter="url(#fSpeck)"/></g>
<g transform="translate(1124,434)"><use href="#frame"/><rect x="2" y="2" width="46" height="46" fill="#9a8680" filter="url(#fSpeck)"/></g>
<g transform="translate(1176,434)"><use href="#frame"/><rect x="2" y="2" width="46" height="46" fill="#f0dcae"/><path d="M16,30 h5 v5 h-5z M20,18 h3 v6 h-3z M38,12 h6 v3 h-6z M6,40 h5 v2 h-5z" fill="#8e7a50"/></g>
<g transform="translate(1228,434)"><use href="#frame"/><rect x="2" y="2" width="46" height="46" fill="#a97a66"/><path d="M6,8 Q20,2 36,10 M4,20 Q16,10 40,22 M8,34 Q24,20 46,32 M14,44 Q30,34 46,42" fill="none" stroke="#cf9e8c" stroke-width="3"/></g>
<g transform="translate(1280,434)"><use href="#frame"/><rect x="2" y="2" width="46" height="46" fill="#76ad5c" filter="url(#fLeaf)"/></g>
<g transform="translate(1124,486)"><use href="#frame"/><rect x="2" y="2" width="46" height="46" fill="#a8ca58" filter="url(#fLeaf)"/></g>
<g transform="translate(1176,486)"><use href="#frame"/><rect x="2" y="2" width="46" height="46" fill="#6f9a1e" filter="url(#fLeaf)"/></g>
<g transform="translate(1228,486)"><use href="#frame"/><rect x="2" y="2" width="46" height="46" fill="#a6bd68" filter="url(#fGrass)"/></g>
<g transform="translate(1280,486)"><use href="#frame"/><rect x="2" y="2" width="46" height="46" fill="#73a858" filter="url(#fGrass)"/></g>
<g transform="translate(1124,538)"><use href="#frame"/><rect x="2" y="2" width="46" height="46" fill="#62ae22" filter="url(#fLeaf)"/></g>
<g transform="translate(1176,538)"><use href="#frame"/><rect x="2" y="2" width="46" height="46" fill="#5fa896" filter="url(#fLeaf)"/></g>
<g transform="translate(1228,538)"><use href="#frame"/><rect x="2" y="2" width="46" height="46" fill="#86ab62" filter="url(#fLeaf)"/></g>
<g transform="translate(1280,538)"><use href="#frame"/><rect x="2" y="2" width="46" height="46" fill="#a34f22"/><path d="M3,2 V48 M12,2 V48 M20,2 V48 M29,2 V48 M38,2 V48 M47,2 V48" stroke="#5e2a10" stroke-width="1.200"/><path d="M8,2 V48 M25,2 V48 M43,2 V48" stroke="#bf6630" stroke-width="2"/></g>
<g transform="translate(1124,590)"><use href="#frame"/><rect x="2" y="2" width="46" height="46" fill="#b5622a"/><rect x="2" y="2" width="46" height="8" fill="#f1e6da"/><path d="M2,2 L6,10 L10,2 L14,10 L18,2 L22,10 L26,2 L30,10 L34,2 L38,10 L42,2 L46,10 M2,10 L6,2 L10,10 L14,2 L18,10 L22,2 L26,10 L30,2 L34,10 L38,2 L42,10 L46,2" stroke="#8a4a24" fill="none" stroke-width="1"/><rect x="2" y="42" width="46" height="6" fill="#6d3c1e"/><path d="M8,10 V42 M14,10 V42 M20,10 V42 M26,10 V42 M32,10 V42 M38,10 V42 M44,10 V42" stroke="#a25a28"/></g>

<!-- tray bottom -->
<rect x="1117" y="690" width="248" height="3" fill="#a6bad4"/>
<rect x="1117" y="693" width="248" height="5" fill="#c8c8c8"/>
<path d="M1117,696 H1365" stroke="#808080"/>
<path d="M1190,694 L1208,699" stroke="#b42020" stroke-dasharray="2 1"/>
<rect x="1118" y="698" width="247" height="1" fill="#f0f0f0"/>
</svg>
</body></html>
